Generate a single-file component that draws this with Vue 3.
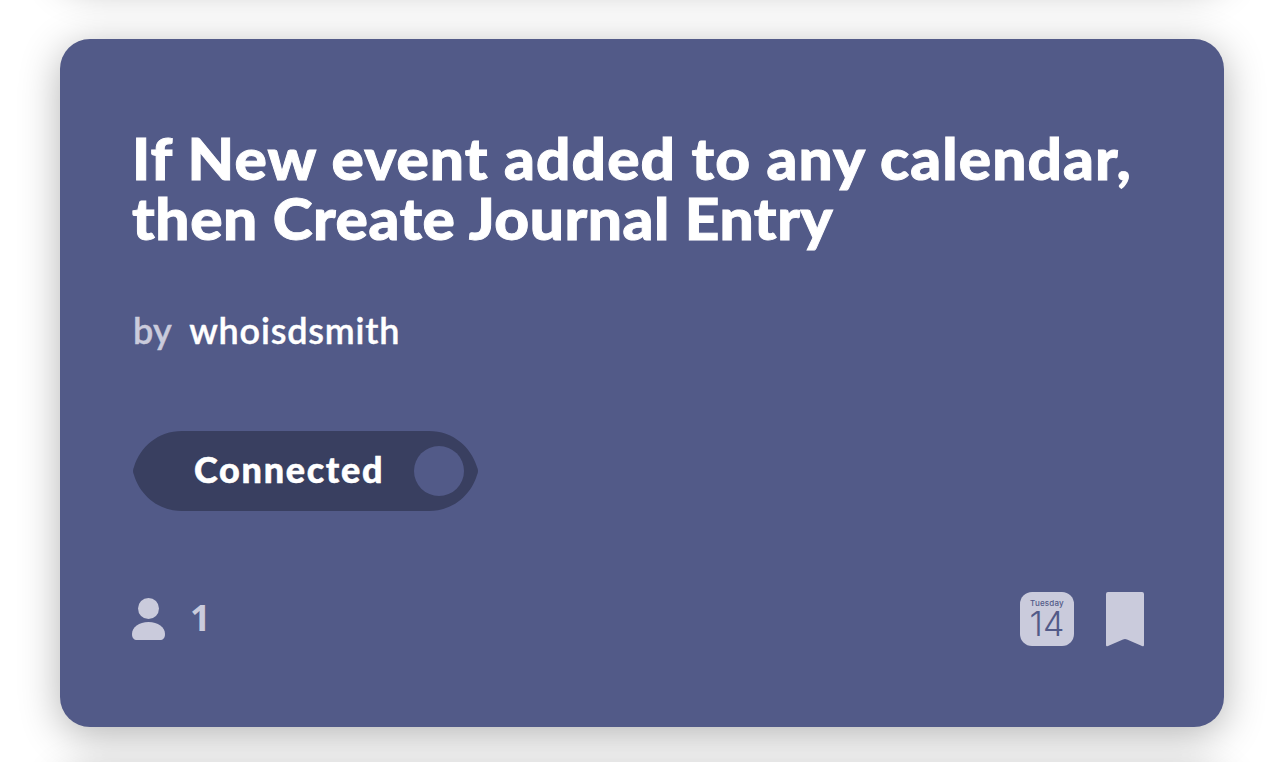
<script setup>
const titleLines = [
  { id: 'trigger', text: 'If New event added to any calendar,' },
  { id: 'action', text: 'then Create Journal Entry' },
]
</script>

<template>
  <main class="feed">
    <div class="card previous"></div>
    <article class="card applet">
      <h1 class="title">
        <span v-for="line in titleLines" :key="line.id" class="line" :class="line.id">{{ line.text }}</span>
      </h1>
      <p class="author"><span class="by">by</span><span class="name">whoisdsmith</span></p>
      <button class="toggle" type="button">
        <svg class="toggle-shape" viewBox="0 0 345 80" aria-hidden="true">
          <path d="M49 0H296C320 0 338 16 344 36Q346 40 344 44C338 64 320 80 296 80H49C25 80 7 64 1 44Q-1 40 1 36C7 16 25 0 49 0Z" fill="#393f60" />
        </svg>
        <span class="toggle-label">Connected</span>
        <span class="knob"></span>
      </button>
      <footer class="meta">
        <div class="users">
          <svg width="33" height="42" viewBox="0 0 33 42" fill="#cacbdc" aria-hidden="true">
            <circle cx="16.5" cy="10.5" r="10.5" />
            <path d="M16.5 24C26 24 33 29 33 36C33 40 31 42 28 42H5C2 42 0 40 0 36C0 29 7 24 16.5 24Z" />
          </svg>
          <span class="count">1</span>
        </div>
        <div class="actions">
          <div class="calendar"><span class="weekday">Tuesday</span><span class="day">14</span></div>
          <svg width="38" height="55" viewBox="0 0 38 55" fill="#cacbdc" aria-hidden="true">
            <path d="M2 0H36Q38 0 38 2V53Q38 55 36 54L21 47.4Q19 46.5 17 47.4L2 54Q0 55 0 53V2Q0 0 2 0Z" />
          </svg>
        </div>
      </footer>
    </article>
    <div class="card"></div>
  </main>
</template>

<style>
html, body { margin: 0; background: #fff; overflow: hidden; }
</style>

<style scoped>
.feed {
  height: 762px;
  overflow: hidden;
  display: flex;
  flex-direction: column;
  align-items: center;
  font-family: Lato, "Open Sans", sans-serif;
}
.card {
  box-sizing: border-box;
  flex: none;
  width: 1164px;
  height: 688px;
  border-radius: 30px;
  background: #525a88;
  box-shadow: 0 8px 40px rgba(0, 0, 0, 0.3);
}
.previous { margin-top: -709px; margin-bottom: 60px; }
.applet { padding: 89px 80px 80px 72px; margin-bottom: 40px; display: flex; flex-direction: column; }
.title { margin: 0; color: #fff; font-size: 57px; line-height: 60px; font-weight: 900; -webkit-text-stroke: 0.9px #fff; }
.line { display: block; white-space: nowrap; transform: scaleX(1.06); transform-origin: left; }
.trigger { letter-spacing: 1px; }
.action { letter-spacing: 0.5px; }
.author { display: flex; gap: 17px; margin: 60px 0 0 1px; font-size: 36px; line-height: 44px; font-weight: 600; color: #fff; letter-spacing: 0.8px; -webkit-text-stroke: 0.4px; }
.by { color: #cacbdc; letter-spacing: 0.3px; }
.toggle { position: relative; display: flex; align-items: center; justify-content: space-between; width: 345px; height: 80px; margin: 79px 0 0 1px; padding: 0 14px 0 61px; border: 0; background: none; color: #fff; font: 900 36px/44px Lato, sans-serif; letter-spacing: 1.7px; }
.toggle-shape { position: absolute; inset: 0; width: 345px; height: 80px; }
.toggle-label { position: relative; white-space: nowrap; padding-bottom: 4px; -webkit-text-stroke: 0.5px #fff; }
.knob { position: relative; width: 50px; height: 50px; border-radius: 50%; background: #525a88; }
.meta { display: flex; justify-content: space-between; align-items: flex-start; margin-top: 81px; }
.users { display: flex; align-items: center; gap: 25px; padding-top: 6px; }
.count { color: #cacbdc; font: 700 36px/40px "Noto Sans", sans-serif; padding-bottom: 2px; }
.actions { display: flex; gap: 32px; }
.calendar { width: 54px; height: 54px; border-radius: 12px; background: #cacbdc; color: #525a88; display: flex; flex-direction: column; align-items: center; }
.weekday { font: 500 8px/10px Inter, sans-serif; letter-spacing: 0.2px; margin-top: 6px; }
.day { font: 300 34px/32px Inter, sans-serif; letter-spacing: 0; }
</style>
